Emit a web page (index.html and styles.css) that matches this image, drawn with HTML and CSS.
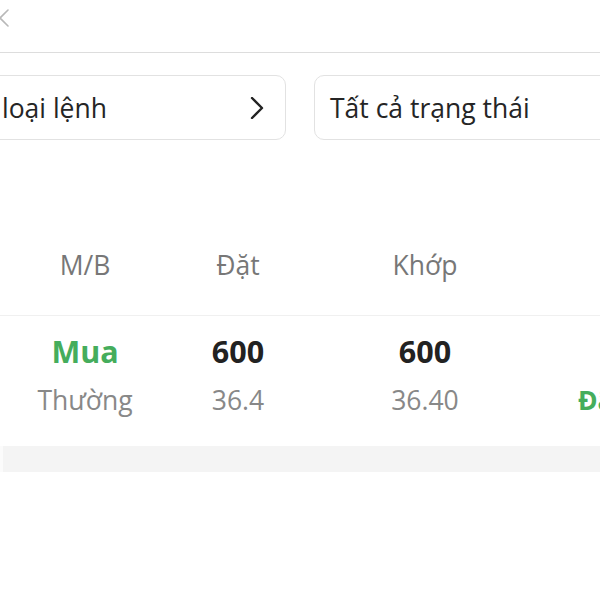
FILE: index.html
```html
<!DOCTYPE html>
<html lang="vi">
<head>
<meta charset="utf-8">
<title>Sổ lệnh</title>
<link rel="stylesheet" href="styles.css">
</head>
<body>
  <div class="screen">
    <header class="topbar">
      <svg class="close" width="20" height="20" viewBox="0 0 20 20" aria-label="Đóng">
        <path d="M2 2 L18 18 M18 2 L2 18" stroke="#b8b8b8" stroke-width="1.6" fill="none" stroke-linecap="round"/>
      </svg>
    </header>

    <div class="filters">
      <div class="filter">
        <span>Tất cả loại lệnh</span>
        <svg class="chev" width="16" height="22" viewBox="0 0 16 22">
          <path d="M3 1 L13 11 L3 21" stroke="#222" stroke-width="2.4" fill="none" stroke-linecap="round" stroke-linejoin="round"/>
        </svg>
      </div>
      <div class="filter">
        <span>Tất cả trạng thái</span>
      </div>
    </div>

    <div class="table">
      <div class="row head">
        <div class="cell">M/B</div>
        <div class="cell">Đặt</div>
        <div class="cell">Khớp</div>
        <div class="cell status"></div>
      </div>
      <div class="row body">
        <div class="cell">
          <div class="main buy">Mua</div>
          <div class="sub">Thường</div>
        </div>
        <div class="cell">
          <div class="main">600</div>
          <div class="sub">36.4</div>
        </div>
        <div class="cell">
          <div class="main">600</div>
          <div class="sub">36.40</div>
        </div>
        <div class="cell status">
          <div class="main"></div>
          <div class="sub done">Đã khớp</div>
        </div>
      </div>
    </div>

    <div class="divider"></div>
  </div>
</body>
</html>
```

FILE: styles.css
```css
html, body {
  margin: 0;
  padding: 0;
  background: #ffffff;
  overflow: hidden;
}

body {
  width: 600px;
  height: 600px;
  font-family: "Open Sans", "Noto Sans", sans-serif;
  color: #222222;
}

.screen {
  width: 600px;
  overflow: hidden;
}

.topbar {
  height: 52px;
  border-bottom: 1px solid #dddddd;
  display: flex;
  align-items: flex-start;
}

.close {
  margin-left: -10px;
  margin-top: 8px;
  flex: none;
}

.filters {
  display: flex;
  gap: 28px;
  margin-top: 22px;
  margin-left: -94px;
}

.filter {
  flex: 0 0 380px;
  box-sizing: border-box;
  height: 65px;
  border: 1px solid #e2e2e2;
  border-radius: 10px;
  padding: 0 20px 0 15px;
  display: flex;
  align-items: center;
  justify-content: space-between;
  font-size: 26.5px;
  color: #252525;
  white-space: nowrap;
}

.chev {
  flex: none;
}

.table {
  margin-top: 74px;
}

.row {
  display: grid;
  grid-template-columns: 170px 136px 238px 1fr;
}

.head {
  padding: 33px 0 32px;
  border-bottom: 1px solid #f0f0f0;
  font-size: 26.5px;
  line-height: 36px;
  color: #777777;
}

.cell {
  text-align: center;
  white-space: nowrap;
}

.cell.status {
  text-align: left;
  padding-left: 34px;
}

.body {
  padding: 14px 0 28px;
}

.main {
  font-size: 30.5px;
  line-height: 42px;
  height: 42px;
  font-weight: 700;
  color: #222222;
}

.main.buy {
  color: #45ad5c;
}

.sub {
  margin-top: 10px;
  font-size: 26.5px;
  line-height: 36px;
  color: #888888;
}

.sub.done {
  color: #45ad5c;
  font-weight: 700;
}

.divider {
  height: 26px;
  background: #f4f4f4;
  border-left: 3px solid #fbfbfb;
}
```
